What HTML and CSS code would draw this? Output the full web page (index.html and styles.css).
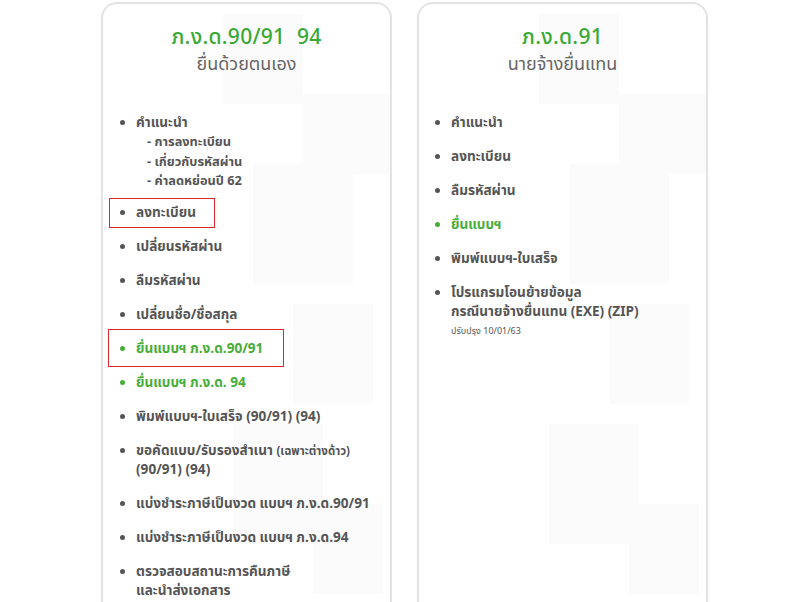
FILE: index.html
```html
<!DOCTYPE html>
<html lang="th">
<head>
<meta charset="utf-8">
<link rel="stylesheet" href="styles.css">
</head>
<body>
<div class="page">
  <section class="card card-left">
    <header class="head">
      <h2 class="title">ภ.ง.ด.90/91&nbsp;&nbsp;94</h2>
      <p class="sub">ยื่นด้วยตนเอง</p>
    </header>
    <ul class="list">
      <li class="with-subs">คำแนะนำ
        <div class="subs">
          <div>- การลงทะเบียน</div>
          <div>- เกี่ยวกับรหัสผ่าน</div>
          <div>- ค่าลดหย่อนปี 62</div>
        </div>
      </li>
      <li><span class="mark mark-1">ลงทะเบียน</span></li>
      <li>เปลี่ยนรหัสผ่าน</li>
      <li>ลืมรหัสผ่าน</li>
      <li>เปลี่ยนชื่อ/ชื่อสกุล</li>
      <li class="green"><span class="mark mark-2">ยื่นแบบฯ ภ.ง.ด.90/91</span></li>
      <li class="green">ยื่นแบบฯ ภ.ง.ด. 94</li>
      <li>พิมพ์แบบฯ-ใบเสร็จ (90/91) (94)</li>
      <li>ขอคัดแบบ/รับรองสำเนา <span class="small">(เฉพาะต่างด้าว)</span><br>(90/91) (94)</li>
      <li>แบ่งชำระภาษีเป็นงวด แบบฯ ภ.ง.ด.90/91</li>
      <li>แบ่งชำระภาษีเป็นงวด แบบฯ ภ.ง.ด.94</li>
      <li>ตรวจสอบสถานะการคืนภาษี<br>และนำส่งเอกสาร</li>
    </ul>
  </section>
  <section class="card card-right">
    <header class="head">
      <h2 class="title">ภ.ง.ด.91</h2>
      <p class="sub">นายจ้างยื่นแทน</p>
    </header>
    <ul class="list">
      <li>คำแนะนำ</li>
      <li>ลงทะเบียน</li>
      <li>ลืมรหัสผ่าน</li>
      <li class="green">ยื่นแบบฯ</li>
      <li>พิมพ์แบบฯ-ใบเสร็จ</li>
      <li>โปรแกรมโอนย้ายข้อมูล<br>กรณีนายจ้างยื่นแทน (EXE) (ZIP)
        <div class="note">ปรับปรุง 10/01/63</div>
      </li>
    </ul>
  </section>
</div>
</body>
</html>
```

FILE: styles.css
```css
html, body {
  margin: 0;
  padding: 0;
  background: #ffffff;
}
body {
  font-family: "Tahoma", "Noto Sans Thai", "Noto Sans", sans-serif;
  color: #555555;
  overflow: hidden;
  height: 602px;
}
.page {
  display: flex;
  gap: 25px;
  padding: 2px 0 0 101px;
}
.card {
  width: 291px;
  height: 700px;
  border: 2px solid #e3e3e3;
  border-bottom: none;
  border-radius: 16px 16px 0 0;
  box-sizing: border-box;
  background-color: #ffffff;
  background-image:
    linear-gradient(#fbfbfb, #fbfbfb),
    linear-gradient(#fbfbfb, #fbfbfb),
    linear-gradient(#fbfbfb, #fbfbfb),
    linear-gradient(#fbfbfb, #fbfbfb),
    linear-gradient(#fbfbfb, #fbfbfb),
    linear-gradient(#fbfbfb, #fbfbfb);
  background-repeat: no-repeat;
  background-size: 80px 90px, 90px 80px, 100px 120px, 80px 100px, 90px 120px, 70px 90px;
  background-position: 120px 10px, 200px 90px, 150px 160px, 190px 300px, 130px 420px, 210px 500px;
}
.head {
  text-align: center;
  padding-top: 20px;
  height: 86px;
  box-sizing: border-box;
}
.title {
  margin: 0;
  font-size: 21px;
  line-height: 28px;
  font-weight: 500;
  color: #3aa935;
  letter-spacing: 0.3px;
}
.sub {
  margin: 0;
  font-size: 18px;
  line-height: 26px;
  color: #666666;
}
.list {
  margin: 24px 0 0;
  padding: 0 0 0 33px;
  font-size: 13.6px;
  font-weight: bold;
  line-height: 19px;
}
.list li {
  margin-bottom: 15px;
}
.list li.with-subs {
  margin-bottom: 12px;
}
.list li.green {
  color: #48ad38;
}
.subs {
  padding-left: 11px;
  font-size: 12.8px;
  line-height: 19.5px;
}
.small {
  font-size: 11.5px;
}
.mark {
  position: relative;
}
.mark::after {
  content: "";
  position: absolute;
  border: 1px solid #d9262b;
}
.mark-1::after {
  left: -27px;
  top: -5px;
  width: 104px;
  height: 28px;
}
.mark-2::after {
  left: -28px;
  top: -10px;
  width: 174px;
  height: 36px;
}
.note {
  font-size: 9px;
  font-weight: normal;
  line-height: 18px;
}
.card-right .list {
  padding-left: 32px;
}
```
